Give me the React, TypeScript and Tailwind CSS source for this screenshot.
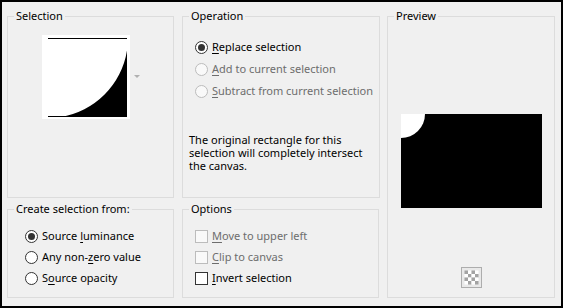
import React from 'react';

const font = { fontFamily: '"Noto Sans", "Open Sans", sans-serif' };

function Radio({ checked = false, disabled = false }: { checked?: boolean; disabled?: boolean }) {
  return (
    <span
      className={`flex h-[13px] w-[13px] shrink-0 items-center justify-center rounded-full border ${
        disabled ? 'border-[#bcbcbc] bg-[#f9f9f9]' : 'border-[#333333] bg-white'
      }`}
    >
      {checked && <span className="h-[7px] w-[7px] rounded-full bg-[#333333]" />}
    </span>
  );
}

function Check({ disabled = false }: { disabled?: boolean }) {
  return (
    <span
      className={`h-[13px] w-[13px] shrink-0 border ${
        disabled ? 'border-[#bcbcbc] bg-[#f9f9f9]' : 'border-[#333333] bg-white'
      }`}
    />
  );
}

// label with an underlined access key
function Label({ pre = '', k, post, disabled = false }: { pre?: string; k: string; post: string; disabled?: boolean }) {
  return (
    <span className={`whitespace-nowrap ${disabled ? 'text-[#6d6d6d]' : 'text-black'}`}>
      {pre}
      <u className="underline-offset-2">{k}</u>
      {post}
    </span>
  );
}

function Group({ title, className, children }: { title: string; className: string; children?: React.ReactNode }) {
  return (
    <fieldset className={`border border-[#dcdcdc] px-[6px] ${className}`}>
      <legend className="px-[2px] text-[11px] leading-[16px] text-black">{title}</legend>
      {children}
    </fieldset>
  );
}

function Thumb() {
  return (
    <svg width="88" height="84" viewBox="0 0 88 84">
      <rect width="88" height="84" fill="#fff" />
      <rect x="6" y="3" width="79" height="1" fill="#000" />
      <rect x="6" y="81" width="79" height="1" fill="#000" />
      <path d="M85 15.6 A80 80 0 0 1 18.6 82 L85 82 Z" fill="#000" />
    </svg>
  );
}

function Checker() {
  const cells = [];
  for (let r = 0; r < 4; r++) {
    for (let c = 0; c < 4; c++) {
      cells.push(
        <rect
          key={`${r}-${c}`}
          x={3.5 + c * 3.5}
          y={3.5 + r * 3.5}
          width="3.5"
          height="3.5"
          fill={(r + c) % 2 === 0 ? '#a3a3a3' : '#ffffff'}
        />
      );
    }
  }
  return (
    <svg width="21" height="21" viewBox="0 0 21 21">
      <rect x="0.5" y="0.5" width="20" height="20" fill="#e9e9e9" stroke="#adadad" />
      {cells}
    </svg>
  );
}

export default function App() {
  return (
    <div
      className="flex h-[308px] w-[563px] gap-[8px] border-2 border-black bg-[#f0f0f0] pl-[5px] pt-[6px] text-[11px]"
      style={font}
    >
      <div className="flex w-[167px] flex-col gap-[3px]">
        <Group title="Selection" className="h-[190px]">
          <div className="ml-[28px] mt-[11px] flex items-center gap-[4px]">
            <Thumb />
            <svg width="6" height="4" viewBox="0 0 6 4">
              <path d="M0 0 L6 0 L3 3 Z" fill="#b0b0b0" />
            </svg>
          </div>
        </Group>
        <Group title="Create selection from:" className="h-[97px]">
          <div className="mt-[9px] flex flex-col pl-[11px]">
            <div className="flex h-[21px] items-center gap-[4px]">
              <Radio checked />
              <Label pre="Source " k="l" post="uminance" />
            </div>
            <div className="flex h-[21px] items-center gap-[4px]">
              <Radio />
              <Label pre="Any non-" k="z" post="ero value" />
            </div>
            <div className="flex h-[21px] items-center gap-[4px]">
              <Radio />
              <Label pre="S" k="o" post="urce opacity" />
            </div>
          </div>
        </Group>
      </div>

      <div className="flex w-[197px] flex-col gap-[3px]">
        <Group title="Operation" className="h-[190px]">
          <div className="mt-[12px] flex flex-col pl-[6px]">
            <div className="flex h-[22px] items-center gap-[4px]">
              <Radio checked />
              <Label k="R" post="eplace selection" />
            </div>
            <div className="flex h-[22px] items-center gap-[4px]">
              <Radio disabled />
              <Label k="A" post="dd to current selection" disabled />
            </div>
            <div className="flex h-[22px] items-center gap-[4px]">
              <Radio disabled />
              <Label k="S" post="ubtract from current selection" disabled />
            </div>
          </div>
          <p className="mt-[31px] leading-[13px] text-black">
            The original rectangle for this
            <br />
            selection will completely intersect
            <br />
            the canvas.
          </p>
        </Group>
        <Group title="Options" className="h-[97px]">
          <div className="mt-[9px] flex flex-col pl-[6px]">
            <div className="flex h-[21px] items-center gap-[4px]">
              <Check disabled />
              <Label k="M" post="ove to upper left" disabled />
            </div>
            <div className="flex h-[21px] items-center gap-[4px]">
              <Check disabled />
              <Label k="C" post="lip to canvas" disabled />
            </div>
            <div className="flex h-[21px] items-center gap-[4px]">
              <Check />
              <Label k="I" post="nvert selection" />
            </div>
          </div>
        </Group>
      </div>

      <Group title="Preview" className="h-[290px] w-[168px]">
        <div className="flex flex-col items-center">
          <svg className="mt-[90px]" width="141" height="94" viewBox="0 0 141 94">
            <rect width="141" height="94" fill="#000" />
            <path d="M0 0 L24 0 A24 24 0 0 1 0 24 Z" fill="#fff" />
          </svg>
          <div className="mt-[59px]">
            <Checker />
          </div>
        </div>
      </Group>
    </div>
  );
}
